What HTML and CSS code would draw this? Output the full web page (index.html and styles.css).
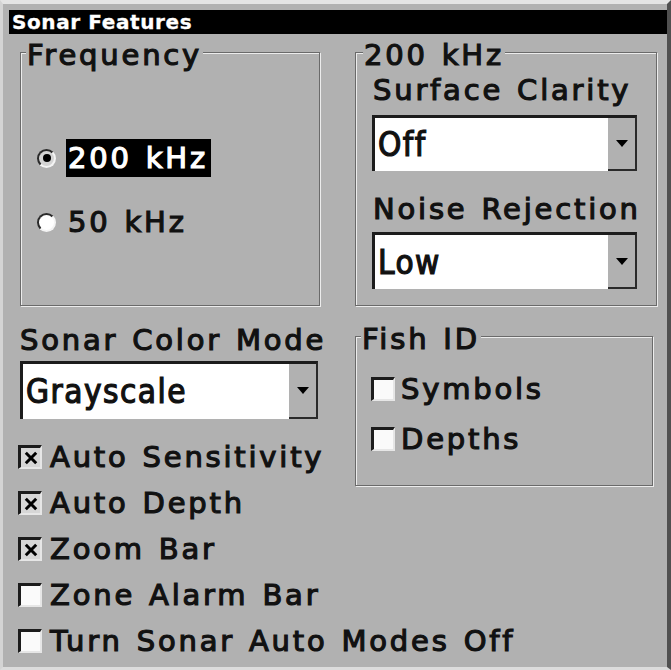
FILE: index.html
```html
<!DOCTYPE html>
<html lang="en">
<head>
<meta charset="utf-8">
<title>Sonar Features</title>
<link rel="stylesheet" href="styles.css">
</head>
<body>
<div class="window">
  <div class="titlebar">Sonar Features</div>
  <div class="main">
    <fieldset class="group freq">
      <legend>Frequency</legend>
      <div class="body">
        <div class="radio-row"><span class="radio checked"></span><span class="opt selected">200 kHz</span></div>
        <div class="radio-row"><span class="radio"></span><span class="opt">50 kHz</span></div>
      </div>
    </fieldset>
    <fieldset class="group khz">
      <legend>200 kHz</legend>
      <div class="body">
        <div class="label">Surface Clarity</div>
        <div class="select"><span class="value">Off</span><span class="drop"><span class="arrow"></span></span></div>
        <div class="label second">Noise Rejection</div>
        <div class="select short"><span class="value">Low</span><span class="drop"><span class="arrow"></span></span></div>
      </div>
    </fieldset>
    <div class="left-stack">
      <div class="label">Sonar Color Mode</div>
      <div class="select wide"><span class="value">Grayscale</span><span class="drop"><span class="arrow"></span></span></div>
      <ul class="checks">
        <li><span class="box on"><svg viewBox="0 0 14 14" width="14" height="14"><path d="M1.8 1.8 L12.2 12.2 M12.2 1.8 L1.8 12.2" stroke="#000" stroke-width="3" fill="none"/></svg></span>Auto Sensitivity</li>
        <li><span class="box on"><svg viewBox="0 0 14 14" width="14" height="14"><path d="M1.8 1.8 L12.2 12.2 M12.2 1.8 L1.8 12.2" stroke="#000" stroke-width="3" fill="none"/></svg></span>Auto Depth</li>
        <li><span class="box on"><svg viewBox="0 0 14 14" width="14" height="14"><path d="M1.8 1.8 L12.2 12.2 M12.2 1.8 L1.8 12.2" stroke="#000" stroke-width="3" fill="none"/></svg></span>Zoom Bar</li>
        <li><span class="box"></span>Zone Alarm Bar</li>
        <li><span class="box"></span>Turn Sonar Auto Modes Off</li>
      </ul>
    </div>
    <fieldset class="group fish">
      <legend>Fish ID</legend>
      <ul class="checks fish-checks">
        <li><span class="box"></span>Symbols</li>
        <li><span class="box"></span>Depths</li>
      </ul>
    </fieldset>
  </div>
</div>
</body>
</html>
```

FILE: styles.css
```css
html, body {
  margin: 0;
  background: #b1b1b1;
}
body {
  font-family: "DejaVu Sans", "Liberation Sans", sans-serif;
  font-size: 29px;
  letter-spacing: 2.8px;
  word-spacing: 2px;
  color: #111;
  -webkit-text-stroke: 1.2px currentColor;
}
.window {
  box-sizing: border-box;
  width: 671px;
  height: 670px;
  border-top: 4px solid #e4e4e4;
  border-left: 3px solid #d4d4d4;
  border-right: 4px solid #505050;
  border-bottom: 3px solid #dcdcdc;
  background: #b1b1b1;
  overflow: hidden;
}
.titlebar {
  margin: 6px 0 0 6px;
  height: 24px;
  background: #000;
  color: #fff;
  font-size: 20px;
  font-weight: bold;
  line-height: 24px;
  letter-spacing: 0.6px;
  word-spacing: 0;
  padding-left: 3px;
  -webkit-text-stroke: 0.3px #fff;
}
.main {
  display: grid;
  grid-template-columns: 300px 302px;
  column-gap: 35px;
  padding-left: 17px;
  margin-top: 2px;
}
.group {
  margin: 0;
  padding: 0;
  min-width: 0;
  border: 1px solid #6a6a6a;
  box-shadow: inset 1px 1px 0 #ececec, 1px 1px 0 #ececec;
}
.group legend {
  padding: 6px 1px 0;
  margin-left: 5px;
  line-height: 27px;
  background: #b1b1b1;
}
.khz legend { margin-left: 7px; }
.label { line-height: 27px; white-space: nowrap; }

.freq .body { padding: 70px 0 0 16px; }
.radio-row { display: flex; align-items: center; height: 38px; }
.radio-row + .radio-row { margin-top: 26px; }
.radio {
  box-sizing: border-box;
  width: 19px;
  height: 19px;
  border-radius: 50%;
  border: 2px solid;
  border-color: #2a2a2a #f4f4f4 #f4f4f4 #2a2a2a;
  background: #fff;
  margin-right: 10px;
  display: flex;
  align-items: center;
  justify-content: center;
  flex: none;
}
.radio.checked { background: #d4d4d4; }
.radio.checked::after {
  content: "";
  width: 8px;
  height: 8px;
  border-radius: 50%;
  background: #000;
}
.opt { padding: 0 3px 0 2px; line-height: 38px; }
.opt.selected { background: #000; color: #fff; }

.khz .body { padding: 8px 19px 16px 17px; }
.select {
  box-sizing: border-box;
  display: flex;
  height: 56px;
  margin-top: 11px;
  margin-left: -1px;
  border-top: 3px solid #1c1c1c;
  border-left: 3px solid #1c1c1c;
  border-right: 2px solid #2a2a2a;
  background: #fff;
}
.select.short { height: 57px; margin-top: 9px; }
.label.second { margin-top: 25px; }
.value {
  flex: 1;
  display: flex;
  align-items: center;
  padding-left: 3px;
  font-family: "DejaVu Sans Condensed", "DejaVu Sans", sans-serif;
  font-stretch: condensed;
  font-size: 33px;
  letter-spacing: 1.5px;
}
.drop {
  width: 27px;
  background: #b1b1b1;
  border-bottom: 2px solid #2a2a2a;
  display: flex;
  align-items: center;
  justify-content: center;
}
.arrow {
  width: 0;
  height: 0;
  border-left: 6px solid transparent;
  border-right: 6px solid transparent;
  border-top: 7px solid #000;
}

.left-stack { align-self: start; }
.left-stack .label { margin-top: 21px; }
.select.wide { height: 58px; margin-top: 7px; margin-left: 0; margin-right: 2px; }
.checks { list-style: none; margin: 15px 0 0 -2px; padding: 0; }
.checks li { display: flex; align-items: center; height: 46px; white-space: nowrap; line-height: 27px; }
.box {
  box-sizing: border-box;
  width: 24px;
  height: 24px;
  border-top: 3px solid #1c1c1c;
  border-left: 3px solid #1c1c1c;
  border-right: 2px solid #e6e6e6;
  border-bottom: 2px solid #e6e6e6;
  background: #fafafa;
  margin-right: 8px;
  flex: none;
  display: flex;
  align-items: center;
  justify-content: center;
}
.box.on { background: #d6d6d6; }

.fish { align-self: start; width: 298px; box-sizing: border-box; margin-top: 14px; }
.fish-checks { margin: 0; padding: 11px 0 21px 15px; }
.fish-checks li { height: 50px; }
.fish-checks .box { margin-right: 6px; }
```
